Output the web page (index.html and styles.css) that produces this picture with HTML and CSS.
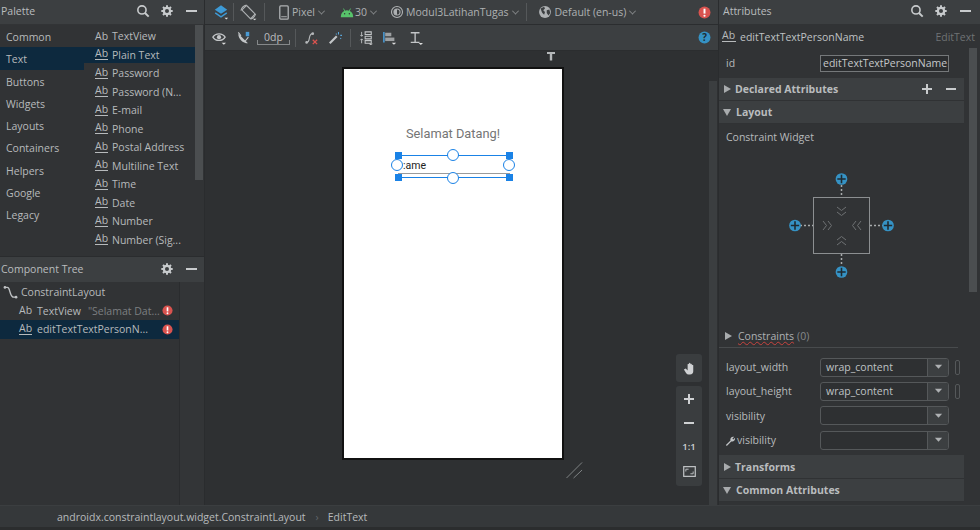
FILE: index.html
```html
<!DOCTYPE html>
<html lang="en">
<head>
<meta charset="utf-8">
<title>Layout Editor</title>
<link rel="stylesheet" href="styles.css">
</head>
<body>
<svg class="defs" width="0" height="0" aria-hidden="true">
  <symbol id="i-search" viewBox="0 0 16 16"><circle cx="6.800" cy="6.800" r="4.700" fill="none" stroke="#c8cbcd" stroke-width="1.800"/><path d="M10.300 10.300L14.500 14.500" stroke="#c8cbcd" stroke-width="2.200"/></symbol>
  <symbol id="i-gear" viewBox="0 0 16 16"><circle cx="8" cy="8" r="3.600" fill="none" stroke="#c8cbcd" stroke-width="2.600"/><path d="M8 1.500V4M8 12v2.500M1.500 8H4M12 8h2.500M3.400 3.400l1.800 1.800M10.800 10.800l1.800 1.800M12.600 3.400l-1.800 1.800M5.200 10.800l-1.800 1.800" stroke="#c8cbcd" stroke-width="2.200"/></symbol>
  <symbol id="i-err" viewBox="0 0 12 12"><circle cx="6" cy="6" r="5.500" fill="#d9534f"/><path d="M6 2.500V7" stroke="#fff" stroke-width="1.800"/><circle cx="6" cy="9" r="1" fill="#fff"/></symbol>
  <symbol id="i-plus" viewBox="0 0 14 14"><circle cx="7" cy="7" r="6.300" fill="#3592c4"/><path d="M7 2.500v9M2.500 7h9" stroke="#1f2a30" stroke-width="1.700"/></symbol>
  <symbol id="i-drop" viewBox="0 0 10 6"><path d="M1 .5h8L5 5z" fill="#aeb1b3"/></symbol>
</svg>

<div class="app">
  <div class="main">
    <aside class="left">
      <section class="palette">
        <header class="phead">
          <span class="ptitle">Palette</span>
          <span class="hicons">
            <svg class="hi"><use href="#i-search"/></svg>
            <svg class="hi"><use href="#i-gear"/></svg>
            <span class="minus"></span>
          </span>
        </header>
        <div class="pbody">
          <ul class="cats">
            <li>Common</li><li class="sel">Text</li><li>Buttons</li><li>Widgets</li><li>Layouts</li><li>Containers</li><li>Helpers</li><li>Google</li><li>Legacy</li>
          </ul>
          <ul class="items">
            <li><span class="ab plain">Ab</span>TextView</li>
            <li class="sel"><span class="ab">Ab</span>Plain Text</li>
            <li><span class="ab">Ab</span>Password</li>
            <li><span class="ab">Ab</span>Password (N...</li>
            <li><span class="ab">Ab</span>E-mail</li>
            <li><span class="ab">Ab</span>Phone</li>
            <li><span class="ab">Ab</span>Postal Address</li>
            <li><span class="ab">Ab</span>Multiline Text</li>
            <li><span class="ab">Ab</span>Time</li>
            <li><span class="ab">Ab</span>Date</li>
            <li><span class="ab">Ab</span>Number</li>
            <li><span class="ab">Ab</span>Number (Sig...</li>
          </ul>
          <div class="pscroll"><div class="thumb"></div></div>
        </div>
      </section>
      <section class="tree">
        <header class="phead tall">
          <span class="ptitle">Component Tree</span>
          <span class="hicons">
            <svg class="hi"><use href="#i-gear"/></svg>
            <span class="minus"></span>
          </span>
        </header>
        <div class="tbody">
          <ul class="tlist">
            <li class="troot">
              <svg class="tic" viewBox="0 0 16 14"><path d="M1 1.500h3.500c2 0 2 2 3 5s1.500 5.500 4 5.500H15" fill="none" stroke="#bfc2c4" stroke-width="1.500"/><circle cx="2" cy="1.500" r="1.400" fill="#bfc2c4"/><circle cx="14" cy="12" r="1.400" fill="#bfc2c4"/></svg>ConstraintLayout
            </li>
            <li class="tnode"><span class="ab plain">Ab</span><span class="tname">TextView</span><span class="tsub">"Selamat Dat...</span><svg class="terr"><use href="#i-err"/></svg></li>
            <li class="tnode sel"><span class="ab">Ab</span><span class="tname">editTextTextPersonN...</span><svg class="terr"><use href="#i-err"/></svg></li>
          </ul>
          <div class="tside"></div>
        </div>
      </section>
    </aside>

    <section class="center">
      <div class="tb1">
        <svg class="tb-i layers" viewBox="0 0 18 18"><path d="M9 1.500L16 6.500 9 11 2 6.500z" fill="#3d9ad6"/><path d="M2.500 10l6.500 4.500L15.500 10" fill="none" stroke="#3d9ad6" stroke-width="1.600"/><path d="M13 15.500h4l-2 1.800z" fill="#ddd"/></svg>
        <span class="sep s1"></span>
        <svg class="tb-i rot" viewBox="0 0 18 18"><g fill="none" stroke="#aeb1b3" stroke-width="1.200"><rect x="5.500" y="2" width="7" height="13" rx="1" transform="rotate(-45 9 8.500)"/><path d="M1 7A8 8 0 0 1 7 1M16.500 10.500A8 8 0 0 1 11 16"/></g><path d="M13.500 15.500h4l-2 1.800z" fill="#ddd"/></svg>
        <span class="sep s2"></span>
        <svg class="tb-i phone" viewBox="0 0 12 16"><rect x="1.500" y="1" width="9" height="14" rx="1" fill="none" stroke="#aeb1b3" stroke-width="1.400"/><path d="M3 12.500h6" stroke="#aeb1b3"/></svg>
        <span class="tb-t t-pixel">Pixel</span><span class="chev"></span>
        <svg class="tb-i droid" viewBox="0 0 16 12"><path d="M1 10.500a7 7 0 0 1 14 0v1H1z" fill="#57c46b"/><path d="M4 1.500L5.500 4.500M12 1.500l-1.500 3" stroke="#57c46b" stroke-width="1"/><circle cx="5.300" cy="7.500" r=".8" fill="#333"/><circle cx="10.700" cy="7.500" r=".8" fill="#333"/></svg>
        <span class="tb-t t-api">30</span><span class="chev"></span>
        <svg class="tb-i theme" viewBox="0 0 16 16"><circle cx="8" cy="8" r="6.300" fill="none" stroke="#aeb1b3" stroke-width="1.300"/><circle cx="8" cy="8" r="3.500" fill="none" stroke="#aeb1b3" stroke-width="1.200"/><path d="M8 4.500a3.500 3.500 0 0 0 0 7z" fill="#aeb1b3"/></svg>
        <span class="tb-t t-mod">Modul3LatihanTugas</span><span class="chev"></span>
        <span class="sep s3"></span>
        <svg class="tb-i globe" viewBox="0 0 16 16"><circle cx="8" cy="8" r="6.800" fill="#aeb1b3"/><path d="M3 4l4-2 1 2-2 2 2 2-1 3-2-2-1-2zM10 6l3-1 1 4-2 3-2-3z" fill="#3c3f41"/></svg>
        <span class="tb-t t-loc">Default (en-us)</span><span class="chev"></span>
        <svg class="tb-err"><use href="#i-err"/></svg>
      </div>
      <div class="tb2">
        <svg class="t2 eye" viewBox="0 0 16 16"><path d="M1 7c3-5 11-5 14 0-3 5-11 5-14 0z" fill="none" stroke="#c3c6c8" stroke-width="1.500"/><circle cx="8" cy="7" r="2.400" fill="#c3c6c8"/><path d="M11 13.500h5l-2.500 2.300z" fill="#ddd"/></svg>
        <svg class="t2 mag" viewBox="0 0 16 16"><path d="M1.500 3c0 6 5 11 11 11L1.500 3z" fill="#c3c6c8"/><path d="M1.500 1.500l3 4M9 12l4-5" stroke="#c3c6c8" stroke-width="1.300"/><rect x="10" y="1" width="4" height="5" fill="#4a9ad4"/></svg>
        <span class="zero">0dp</span>
        <span class="sep s4"></span>
        <svg class="t2 noc" viewBox="0 0 16 16"><path d="M3 13c5 0 1-10 7-10" fill="none" stroke="#b5b8ba" stroke-width="1.300"/><circle cx="3" cy="13" r="1.500" fill="#b5b8ba"/><circle cx="10" cy="3" r="1.500" fill="#b5b8ba"/><path d="M10 10l5 5M15 10l-5 5" stroke="#d9534f" stroke-width="1.500"/></svg>
        <svg class="t2 wand" viewBox="0 0 16 16"><path d="M2 14l8-8" stroke="#c3c6c8" stroke-width="2.500"/><path d="M12 1v3M14 5h2M9 3l1 1M14 8l1 1" stroke="#5aa6da" stroke-width="1.200"/></svg>
        <span class="sep s5"></span>
        <svg class="t2 pack" viewBox="0 0 16 16"><path d="M3 1v5M1.500 4.500L3 6l1.500-1.500M3 14v-5M1.500 10.500L3 9l1.500 1.500" fill="none" stroke="#c3c6c8"/><path d="M7 1h7v3H7zM7 6h7v3H7zM7 11h7v3H7z" fill="none" stroke="#c3c6c8" stroke-width="1.200"/><path d="M11 14.500h5l-2.500 1.500z" fill="#ddd"/></svg>
        <svg class="t2 align" viewBox="0 0 16 16"><path d="M1 1v12" stroke="#4a9ad4" stroke-width="1.800"/><rect x="2.500" y="2" width="7" height="4" fill="#9da0a2"/><rect x="2.500" y="7.500" width="10.500" height="4" fill="#9da0a2"/><path d="M10 13.500h5l-2.500 2.300z" fill="#ddd"/></svg>
        <svg class="t2 guide" viewBox="0 0 16 16"><path d="M2 2h10M2 13h10M7 2v11" stroke="#c3c6c8" stroke-width="1.500"/><path d="M11 13.800h5l-2.500 2.100z" fill="#ddd"/></svg>
        <svg class="help" viewBox="0 0 12 12"><circle cx="6" cy="6" r="5.500" fill="#3592c4"/><text x="6" y="9" text-anchor="middle" class="qm">?</text></svg>
      </div>
      <div class="canvas">
        <svg class="pin" viewBox="0 0 8 9"><path d="M0 0h8v2H5.200v6.500H2.800V2H0z" fill="#b4b7b9"/></svg>
        <div class="device">
          <p class="hello">Selamat Datang!</p>
          <div class="edit">
            <span class="etext">:ame</span>
            <span class="eline"></span>
            <span class="bound b-top"></span><span class="bound b-bot"></span>
            <span class="h h-tl"></span><span class="h h-tr"></span><span class="h h-bl"></span><span class="h h-br"></span>
            <span class="a a-t"></span><span class="a a-b"></span><span class="a a-l"></span><span class="a a-r"></span>
          </div>
        </div>
        <svg class="resize" viewBox="0 0 18 18"><path d="M.5 17L17 .5M8 17l9-8.500" stroke="#85888a" fill="none"/></svg>
        <div class="zoomtools">
          <div class="ztbox"><svg class="zi" viewBox="0 0 16 16"><path d="M2 9l2-1 2 2V3.500a.8.8 0 0 1 1.500 0V2.500a.8.8 0 0 1 1.500 0v1a.8.8 0 0 1 1.500 0v1a.8.8 0 0 1 1.500 0V11c0 2-1 3.500-3.500 3.500H7C5 14.500 4 12 2 9z" fill="#d0d2d4"/></svg></div>
          <div class="ztbox col">
            <span class="zb plus"></span>
            <span class="zb dash"></span>
            <span class="zb one">1:1</span>
            <svg class="zfit" viewBox="0 0 14 12"><rect x=".7" y=".7" width="12.600" height="10.600" fill="none" stroke="#c3c6c8" stroke-width="1.300"/><path d="M3 6V3.500h3M11 6v2.500H8" fill="none" stroke="#c3c6c8"/></svg>
          </div>
        </div>
        <div class="cscroll"></div>
      </div>
    </section>

    <aside class="right">
      <header class="phead">
        <span class="ptitle">Attributes</span>
        <span class="hicons">
          <svg class="hi"><use href="#i-search"/></svg>
          <svg class="hi"><use href="#i-gear"/></svg>
          <span class="minus"></span>
        </span>
      </header>
      <div class="abody">
        <div class="acomp"><span class="ab">Ab</span><span class="acname">editTextTextPersonName</span><span class="actype">EditText</span></div>
        <div class="ascrollwrap">
          <div class="acontent">
            <div class="arow idrow"><span class="alabel">id</span><span class="idinput">editTextTextPersonName</span></div>
            <div class="sect"><span class="tri r"></span>Declared Attributes<span class="sacts"><span class="s-plus"></span><span class="s-minus"></span></span></div>
            <div class="sect"><span class="tri d"></span>Layout</div>
            <div class="cw-title">Constraint Widget</div>
            <div class="cw">
              <svg class="cw-svg" viewBox="0 0 120 110">
                <g fill="none" stroke="#8c8f91" stroke-width="1"><rect x="31.500" y="29.500" width="56" height="56"/></g>
                <g stroke="#a8abad" stroke-dasharray="2 2" stroke-width="1.500"><path d="M59.500 17v12M59.500 86v12M18 57.500h13M88 57.500h13"/></g>
                <g fill="none" stroke="#6f7274" stroke-width="1">
                  <path d="M55 39l4.500 3.500 4.500-3.500M55 44l4.500 3.500 4.500-3.500M55 77l4.500-3.500 4.500 3.500M55 72l4.500-3.500 4.500 3.500"/>
                  <path d="M41 53l3.500 4.500-3.500 4.500M46 53l3.500 4.500-3.500 4.500M79 53l-3.500 4.500 3.500 4.500M74 53l-3.500 4.500 3.500 4.500"/>
                </g>
                <use href="#i-plus" x="53" y="4.500" width="13" height="13"/>
                <use href="#i-plus" x="53" y="97.500" width="13" height="13"/>
                <use href="#i-plus" x="6.500" y="51" width="13" height="13"/>
                <use href="#i-plus" x="99.500" y="51" width="13" height="13"/>
              </svg>
            </div>
            <div class="cons"><span class="tri r dim"></span><span class="squig">Constraints</span> <span class="cnt">(0)</span></div>
            <div class="arow first"><span class="alabel">layout_width</span><span class="combo"><span class="cval">wrap_content</span><span class="cbtn"><svg class="dr"><use href="#i-drop"/></svg></span></span><span class="pill"></span></div>
            <div class="arow"><span class="alabel">layout_height</span><span class="combo"><span class="cval">wrap_content</span><span class="cbtn"><svg class="dr"><use href="#i-drop"/></svg></span></span><span class="pill"></span></div>
            <div class="arow"><span class="alabel">visibility</span><span class="combo"><span class="cval"></span><span class="cbtn"><svg class="dr"><use href="#i-drop"/></svg></span></span></div>
            <div class="arow"><span class="alabel"><svg class="wrench" viewBox="0 0 12 12"><path d="M1 11l5-5c-.8-2 .8-4.500 4-4L8 4l1 1 2-2c.3 3-2 4.800-4.200 4L2 12z" fill="#c3c6c8"/></svg>visibility</span><span class="combo"><span class="cval"></span><span class="cbtn"><svg class="dr"><use href="#i-drop"/></svg></span></span></div>
            <div class="sect s-t"><span class="tri r"></span>Transforms</div>
            <div class="sect"><span class="tri d"></span>Common Attributes</div>
          </div>
          <div class="ascroll"><div class="athumb"></div></div>
        </div>
      </div>
    </aside>
  </div>
  <footer class="crumbs"><span>androidx.constraintlayout.widget.ConstraintLayout</span><span class="crsep">›</span><span>EditText</span></footer>
  <div class="strip"></div>
</div>
</body>
</html>
```
FILE: styles.css
```css
* { box-sizing: border-box; }
html, body { margin: 0; padding: 0; }
body { width: 980px; height: 530px; overflow: hidden; background: #2e3032; font-family: "Open Sans", "Noto Sans", sans-serif; font-size: 10.5px; color: #bbbdbf; }
ul { list-style: none; margin: 0; padding: 0; }
p { margin: 0; }
.defs { position: absolute; }
.app { width: 980px; height: 530px; display: flex; flex-direction: column; }
.main { flex: 0 0 505px; display: flex; height: 505px; }

.left { width: 205px; display: flex; flex-direction: column; border-right: 1px solid #2a2c2e; }
.palette { height: 256px; display: flex; flex-direction: column; background: #313335; }
.phead { height: 24px; flex: none; display: flex; align-items: center; justify-content: space-between; background: #3c3f41; padding: 0 7.5px 2px 1px; }
.phead.tall { height: 25px; padding-bottom: 2px; }
.ptitle { color: #b9bcbe; }
.hicons { display: flex; align-items: center; gap: 10px; }
.hi { width: 14px; height: 14px; }
.minus { width: 11px; height: 2px; background: #c8cbcd; margin-left: 1.500px; }

.pbody { flex: 1; display: flex; border-top: 1px solid #323436; position: relative; }
.cats { width: 84px; }
.cats li { height: 22.300px; line-height: 25px; padding-left: 6px; color: #b7babc; }
.cats li.sel { background: #0d293e; }
.items { width: 119px; padding-top: 2px; }
.items li { height: 18.500px; display: flex; align-items: center; color: #b7babc; padding-left: 11px; }
.items li.sel { background: #0d293e; height: 16px; margin: 1.500px 0 1px; padding-bottom: 1px; }
.ab { font-size: 10.500px; line-height: 10px; width: 13px; margin-right: 4px; flex: none; color: #b7babc; border-bottom: 1px solid #b7babc; padding-bottom: 1px; margin-top: -1px; }
.ab.plain { border-bottom: 0; padding-bottom: 0; }
.pscroll { position: absolute; left: 195px; top: 0; width: 8px; height: 100%; }
.thumb { height: 155px; background: #4b4e50; }

.tree { flex: 1; display: flex; flex-direction: column; border-top: 1px solid #2a2c2e; background: #313335; }
.tbody { flex: 1; display: flex; }
.tlist { width: 180px; padding-top: 1px; border-right: 1px solid #2a2c2e; }
.tside { flex: 1; background: #333537; }
.tlist li { height: 18.500px; display: flex; align-items: center; color: #b7babc; }
.troot { padding-left: 3px; }
.tic { width: 15px; height: 13px; margin-right: 3px; }
.tnode { padding-left: 19px; }
.tnode .ab { margin-right: 5px; }
.tnode.sel { background: #0d293e; }
.tname { white-space: nowrap; }
.tsub { color: #7c7f81; margin-left: 7px; white-space: nowrap; }
.terr { width: 11px; height: 11px; margin-left: auto; margin-right: 6px; flex: none; }

.center { width: 513px; display: flex; flex-direction: column; }
.tb1 { height: 25px; flex: none; background: #3c3f41; display: flex; align-items: center; padding-left: 8px; border-bottom: 1px solid #2b2d2f; color: #aeb1b3; }
.tb2 { height: 26px; flex: none; background: #3c3f41; display: flex; align-items: center; padding-left: 7px; border-bottom: 1px solid #2b2d2f; }
.tb-i { width: 16px; height: 16px; flex: none; }
.sep { width: 1px; height: 18px; background: #55585a; flex: none; }
.s1 { margin-left: 4px; }
.rot { width: 17px; height: 17px; margin-left: 6px; }
.s2 { margin-left: 7px; }
.phone { width: 12px; height: 15px; margin-left: 13px; }
.droid { width: 14px; height: 11px; margin-left: 16px; }
.theme { width: 14px; height: 14px; margin-left: 14px; }
.s3 { margin-left: 8px; }
.globe { width: 14px; height: 14px; margin-left: 11px; }
.tb-t { color: #aeb1b3; white-space: nowrap; }
.t-pixel { margin-left: 2px; }
.t-api { margin-left: 1px; }
.t-mod { margin-left: 2px; }
.t-loc { margin-left: 3px; }
.chev { width: 5px; height: 5px; border-right: 1px solid #85888a; border-bottom: 1px solid #85888a; transform: rotate(45deg) translate(-1px, -1px); margin-left: 4px; flex: none; }
.tb-err { width: 13px; height: 13px; margin-left: auto; margin-right: 7px; flex: none; }
.t2 { width: 14px; height: 14px; flex: none; }
.mag { margin-left: 11px; }
.zero { width: 33px; height: 14px; position: relative; font-size: 10.500px; line-height: 12px; text-align: center; color: #bbbdbf; border-bottom: 1px solid #85888a; flex: none; margin-left: 6px; }
.zero::before, .zero::after { content: ""; position: absolute; bottom: -1px; width: 1px; height: 5px; background: #85888a; }
.zero::before { left: 0; }
.zero::after { right: 0; }
.s4 { margin-left: 5px; }
.noc { margin-left: 8px; }
.wand { margin-left: 10px; }
.s5 { margin-left: 8px; }
.pack { margin-left: 8px; }
.align { margin-left: 10px; }
.guide { margin-left: 12px; }
.help { width: 13px; height: 13px; margin-left: auto; margin-right: 7px; flex: none; }
.qm { font-size: 9px; font-weight: 700; fill: #1d2b33; font-family: "Open Sans", sans-serif; }

.canvas { flex: 1; position: relative; background: #2e3032; overflow: hidden; }
.pin { position: absolute; left: 342px; top: 1px; width: 8px; height: 9px; }
.device { position: absolute; left: 137px; top: 16px; width: 222px; height: 393px; background: #fff; border: 2px solid #111; }
.hello { position: absolute; left: 0; right: 0; top: 57px; text-align: center; font-family: "Roboto", sans-serif; font-size: 12.800px; color: #757575; }
.edit { position: absolute; left: 54px; top: 86px; width: 112px; height: 23px; }
.etext { position: absolute; left: 5px; top: 4px; font-family: "Roboto", sans-serif; font-size: 10.500px; color: #222; line-height: 14px; }
.eline { position: absolute; left: 0; right: 0; top: 18px; height: 1px; background: #9a9a9a; }
.bound { position: absolute; left: 0; right: 0; height: 1px; background: #1a82e6; }
.b-top { top: 0; }
.b-bot { bottom: 0; }
.h { position: absolute; width: 7px; height: 7px; background: #1a82e6; }
.h-tl { left: -3px; top: -3px; }
.h-tr { right: -3px; top: -3px; }
.h-bl { left: -3px; bottom: -3px; }
.h-br { right: -3px; bottom: -3px; }
.a { position: absolute; width: 12px; height: 12px; background: #fff; border: 1px solid #1a82e6; border-radius: 50%; }
.a-t { left: 49px; top: -6px; }
.a-b { left: 49px; bottom: -6px; }
.a-l { left: -7px; top: 4px; background: transparent; }
.a-r { right: -5px; top: 4px; }
.resize { position: absolute; left: 361px; top: 411px; width: 17px; height: 17px; }
.zoomtools { position: absolute; left: 471px; top: 303px; width: 26px; display: flex; flex-direction: column; gap: 4px; }
.ztbox { background: #3a3d3f; border-radius: 3px; display: flex; justify-content: center; align-items: center; height: 28px; }
.ztbox.col { height: 100px; flex-direction: column; justify-content: flex-start; padding-top: 8px; }
.zi { width: 15px; height: 15px; }
.zb { flex: none; position: relative; display: block; }
.plus { width: 10px; height: 10px; margin-bottom: 18px; background: linear-gradient(#cfd1d3, #cfd1d3) center / 100% 2px no-repeat, linear-gradient(#cfd1d3, #cfd1d3) center / 2px 100% no-repeat; }
.dash { width: 10px; height: 2px; background: #cfd1d3; margin-bottom: 16.500px; }
.one { font-size: 9.500px; font-weight: 600; line-height: 11px; color: #cfd1d3; margin-bottom: 14px; }
.zfit { width: 13px; height: 11px; }
.cscroll { position: absolute; left: 504px; top: 30px; bottom: 0; width: 8px; background: #3b3e40; }

.right { flex: 1; display: flex; flex-direction: column; background: #313335; border-left: 1px solid #2a2c2e; }
.right .phead { padding-left: 4px; padding-right: 9.500px; }
.abody { flex: 1; display: flex; flex-direction: column; min-height: 0; }
.acomp { height: 24px; flex: none; display: flex; align-items: center; padding: 1px 5px 0 3px; }
.acomp .ab { width: 14px; margin-right: 4px; }
.acname { color: #bfc2c4; }
.actype { margin-left: auto; color: #6f7274; }
.ascrollwrap { flex: 1; display: flex; min-height: 0; position: relative; }
.acontent { width: 245px; }
.ascroll { position: absolute; left: 250px; top: 0; width: 8px; height: 244px; }
.athumb { height: 100%; background: #4b4e50; }
.arow { display: flex; align-items: center; height: 24.300px; padding-left: 7px; position: relative; }
.arow.first { margin-top: 7px; }
.idrow { height: 30px; }
.alabel { width: 94px; flex: none; color: #b7babc; display: flex; align-items: center; white-space: nowrap; }
.idinput { width: 129px; height: 17px; flex: none; border: 1px solid #75787a; background: #2b2d2f; color: #c5c8ca; line-height: 15px; padding-left: 2px; white-space: nowrap; overflow: hidden; }
.sect { height: 23px; display: flex; align-items: center; background: #3c3f41; border-bottom: 1px solid #303234; font-weight: 700; color: #b9bcbe; padding-left: 5px; position: relative; }
.s-t { margin-top: 3px; height: 24px; }
.tri { width: 0; height: 0; flex: none; }
.tri.r { border-left: 7px solid #a8abad; border-top: 4.500px solid transparent; border-bottom: 4.500px solid transparent; margin-right: 4px; }
.tri.d { border-top: 7px solid #a8abad; border-left: 4.500px solid transparent; border-right: 4.500px solid transparent; margin-right: 5px; margin-left: -1px; }
.sacts { margin-left: auto; display: flex; align-items: center; gap: 14px; padding-right: 8px; }
.s-plus { width: 10px; height: 10px; background: linear-gradient(#c8cbcd, #c8cbcd) center / 100% 2px no-repeat, linear-gradient(#c8cbcd, #c8cbcd) center / 2px 100% no-repeat; }
.s-minus { width: 10px; height: 2px; background: #c8cbcd; }
.cw-title { height: 29px; line-height: 26px; padding-left: 7px; color: #b7babc; }
.cw { height: 172px; display: flex; justify-content: center; padding-left: 2px; padding-top: 15px; }
.cw-svg { width: 120px; height: 110px; margin-left: -1px; }
.cons { height: 24px; margin: -1px 6px 0 0; padding: 0 0 0 6px; display: flex; align-items: center; border-bottom: 1px solid #484b4d; color: #aeb1b3; }
.cons .tri { margin-right: 6px; }
.squig { text-decoration: underline wavy #c8433e 1px; text-underline-offset: 1px; }
.cnt { margin-left: 3px; color: #85888a; }
.combo { width: 129px; height: 19px; flex: none; display: flex; border: 1px solid #55585a; border-radius: 3px; background: #2e3032; }
.cval { flex: 1; padding-left: 5px; line-height: 17px; color: #bfc2c4; }
.cbtn { width: 21px; flex: none; background: #3c3f41; border-left: 1px solid #55585a; display: flex; align-items: center; justify-content: center; border-radius: 0 2px 2px 0; }
.dr { width: 9px; height: 6px; }
.pill { width: 5px; height: 15px; border: 1px solid #55585a; border-radius: 2px; margin-left: 6px; flex: none; }
.wrench { width: 11px; height: 11px; margin-right: 1px; margin-left: -1px; }
.crumbs { flex: 0 0 22px; height: 22px; background: #35383a; border-top: 1px solid #3b3e40; display: flex; align-items: center; padding-left: 57px; color: #b7babc; }
.crsep { color: #62666a; margin: 0 9px 0 10px; }
.strip { flex: 1; background: #2b2d2e; }
```
